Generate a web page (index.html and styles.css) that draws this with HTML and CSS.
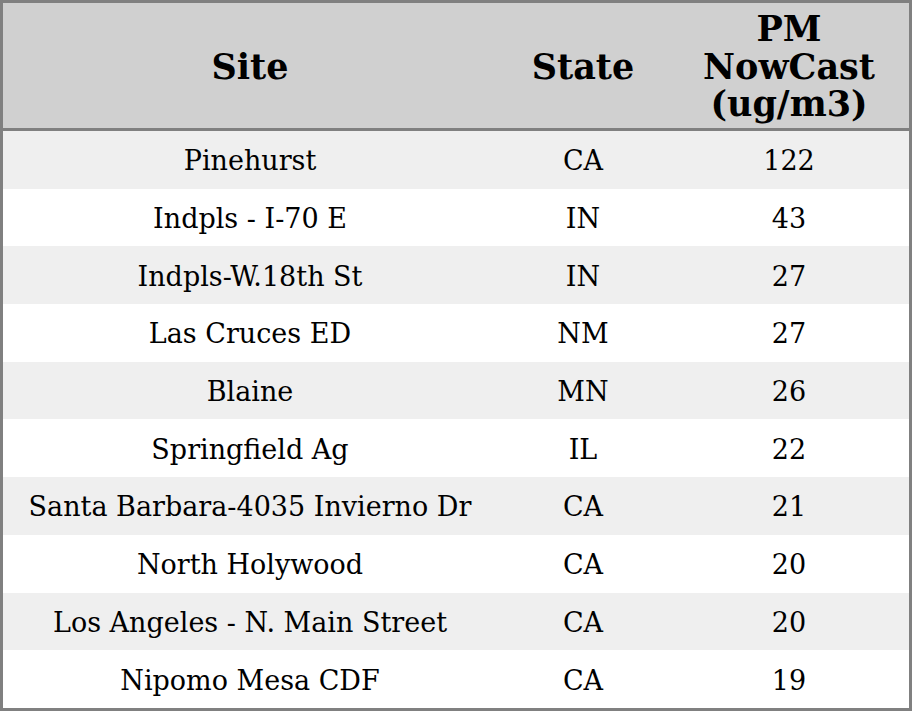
FILE: index.html
```html
<!DOCTYPE html>
<html>
<head>
<meta charset="utf-8">
<link rel="stylesheet" href="styles.css">
</head>
<body>
<table class="aq">
<colgroup><col class="c-site"><col class="c-state"><col class="c-pm"></colgroup>
<thead>
<tr><th>Site</th><th>State</th><th>PM<br>NowCast<br>(ug/m3)</th></tr>
</thead>
<tbody>
<tr><td>Pinehurst</td><td>CA</td><td>122</td></tr>
<tr><td>Indpls - I-70 E</td><td>IN</td><td>43</td></tr>
<tr><td>Indpls-W.18th St</td><td>IN</td><td>27</td></tr>
<tr><td>Las Cruces ED</td><td>NM</td><td>27</td></tr>
<tr><td>Blaine</td><td>MN</td><td>26</td></tr>
<tr><td>Springfield Ag</td><td>IL</td><td>22</td></tr>
<tr><td>Santa Barbara-4035 Invierno Dr</td><td>CA</td><td>21</td></tr>
<tr><td>North Holywood</td><td>CA</td><td>20</td></tr>
<tr><td>Los Angeles - N. Main Street</td><td>CA</td><td>20</td></tr>
<tr><td>Nipomo Mesa CDF</td><td>CA</td><td>19</td></tr>
</tbody>
</table>
</body>
</html>
```
FILE: styles.css
```css
html, body { margin: 0; padding: 0; background: #fff; }
body { font-family: "DejaVu Serif", serif; color: #000; }
.aq {
  width: 912px;
  height: 711px;
  border-collapse: separate;
  border-spacing: 0;
  border: 3px solid #808080;
  box-sizing: border-box;
  table-layout: fixed;
}
.c-site { width: 494px; }
.c-state { width: 172px; }
.c-pm { width: 240px; }
.aq th {
  background: #d0d0d0;
  font-size: 35px;
  font-weight: bold;
  line-height: 37.5px;
  height: 113px;
  padding: 7px 0 5px;
  border-bottom: 3px solid #808080;
  text-align: center;
  vertical-align: middle;
}
.aq td {
  font-size: 27px;
  height: 55.7px;
  padding: 2px 0 0;
  text-align: center;
  vertical-align: middle;
}
.aq tbody tr:nth-child(odd) td { background: #efefef; }
.aq tbody tr:nth-child(even) td { background: #fff; }
```
